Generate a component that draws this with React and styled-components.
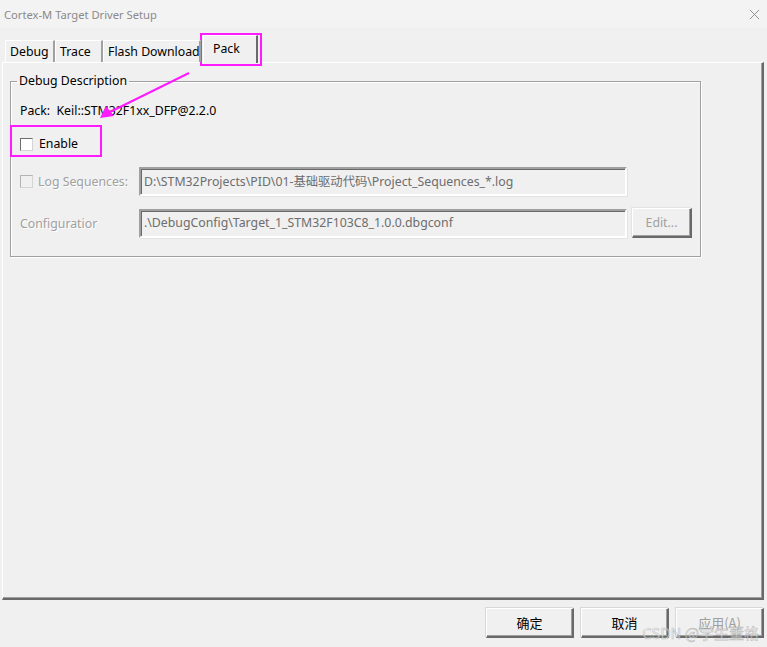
import React from 'react';
import styled, { createGlobalStyle } from 'styled-components';

const GlobalStyle = createGlobalStyle`
    html, body {
        margin: 0;
        padding: 0;
        background: #f0f0f0;
    }
    body {
        font-family: "Noto Sans", "Noto Sans CJK SC", sans-serif;
        font-size: 12.3px;
        color: #000;
    }
`;

const tabs = [
    { label: 'Debug', width: 50 },
    { label: 'Trace', width: 48 },
    { label: 'Flash Download', width: 98 },
    { label: 'Pack', width: 55, active: true },
];

export default () => (
    <Window>
        <GlobalStyle />
        <TitleBar>
            <span>Cortex-M Target Driver Setup</span>
            <CloseIcon viewBox="0 0 12 12">
                <path d="M1 1 L11 11 M11 1 L1 11" />
            </CloseIcon>
        </TitleBar>

        <TabStrip>
            {tabs.map((t) => (
                <Tab key={t.label} $active={t.active} style={{ width: t.width }}>
                    {t.label}
                </Tab>
            ))}
        </TabStrip>

        <Panel>
            <GroupBox>
                <legend>Debug Description</legend>
                <InfoLine>Pack:&nbsp; Keil::STM32F1xx_DFP@2.2.0</InfoLine>
                <CheckRow>
                    <CheckBox />
                    <span>Enable</span>
                </CheckRow>
                <FieldRow $top={14}>
                    <FieldLabel>
                        <CheckBox $disabled />
                        <span>Log Sequences:</span>
                    </FieldLabel>
                    <PathBox>D:\STM32Projects\PID\01-基础驱动代码\Project_Sequences_*.log</PathBox>
                </FieldRow>
                <FieldRow $top={12}>
                    <FieldLabel>Configuratior</FieldLabel>
                    <PathBox>.\DebugConfig\Target_1_STM32F103C8_1.0.0.dbgconf</PathBox>
                    <SmallButton disabled>Edit...</SmallButton>
                </FieldRow>
            </GroupBox>
        </Panel>

        <ButtonBar>
            <DialogButton>确定</DialogButton>
            <DialogButton>取消</DialogButton>
            <DialogButton disabled>应用(A)</DialogButton>
        </ButtonBar>

        <Mark $x={200} $y={33} $w={62} $h={33} />
        <Mark $x={10} $y={125} $w={92} $h={32} />
        <Arrow viewBox="0 0 767 647">
            <line x1="189" y1="73" x2="110" y2="112" />
            <polygon points="100,118 106,106 114,116" />
        </Arrow>
        <Watermark>CSDN @学生董格</Watermark>
    </Window>
);

const Window = styled.div`
    position: relative;
    width: 767px;
    height: 647px;
    display: flex;
    flex-direction: column;
    overflow: hidden;
    background: #f0f0f0;
`;

const TitleBar = styled.div`
    height: 28px;
    flex: none;
    display: flex;
    align-items: center;
    justify-content: space-between;
    padding: 0 7px 0 4px;
    background: #f3f3f3;
    color: #8a8a8a;
    font-size: 11.2px;
`;

const CloseIcon = styled.svg`
    width: 11px;
    height: 11px;
    fill: none;
    stroke: #8a8a8a;
    stroke-width: 1;
`;

const TabStrip = styled.div`
    display: flex;
    align-items: flex-end;
    height: 34px;
    padding-left: 5px;
    flex: none;
`;

const Tab = styled.div`
    position: relative;
    box-sizing: border-box;
    flex: none;
    height: ${(p) => (p.$active ? '28px' : '22px')};
    margin: ${(p) => (p.$active ? '0 0 -1px 2px' : '0')};
    padding: ${(p) => (p.$active ? '4px 0 0 9px' : '2px 0 0 4px')};
    border-top: 1px solid #fff;
    border-left: 1px solid #fff;
    border-right: 2px solid #696969;
    border-right-color: ${(p) => (p.$active ? '#696969' : '#a0a0a0')};
    background: #f0f0f0;
    line-height: 18px;
    white-space: nowrap;
    overflow: hidden;
    z-index: ${(p) => (p.$active ? 2 : 1)};
`;

const Panel = styled.div`
    flex: none;
    height: 538px;
    margin: 0 3px 0 2px;
    box-sizing: border-box;
    border-top: 1px solid #fff;
    border-left: 1px solid #fff;
    border-right: 2px solid #696969;
    border-bottom: 2px solid #696969;
    box-shadow: inset -1px -1px 0 #a0a0a0;
    padding: 11px 0 0 7px;
`;

const GroupBox = styled.fieldset`
    box-sizing: border-box;
    width: 690px;
    height: 183px;
    margin: 0;
    padding: 14px 8px 0 9px;
    border: 1px solid #a0a0a0;
    box-shadow: 1px 1px 0 #fff, inset 1px 1px 0 #fff;

    legend {
        padding: 0 2px;
        margin-left: -3px;
        line-height: 14px;
    }
`;

const InfoLine = styled.div`
    line-height: 18px;
`;

const CheckRow = styled.label`
    display: flex;
    align-items: center;
    gap: 6px;
    margin-top: 15px;
    line-height: 18px;
`;

const CheckBox = styled.span`
    display: inline-block;
    box-sizing: border-box;
    width: 13px;
    height: 13px;
    flex: none;
    border: 1px solid ${(p) => (p.$disabled ? '#b4b4b4' : '#6d6d6d')};
    border-right-color: #d4d4d4;
    border-bottom-color: #d4d4d4;
    background: ${(p) => (p.$disabled ? '#f0f0f0' : '#fff')};
`;

const FieldRow = styled.div`
    display: flex;
    align-items: center;
    margin-top: ${(p) => p.$top}px;
`;

const FieldLabel = styled.div`
    width: 119px;
    flex: none;
    display: flex;
    align-items: center;
    gap: 5px;
    color: #a0a0a0;
    text-shadow: 1px 1px 0 #fff;
`;

const PathBox = styled.div`
    box-sizing: border-box;
    width: 488px;
    height: 29px;
    flex: none;
    padding: 3px 3px 0;
    border: 2px solid #a0a0a0;
    border-right-color: #fff;
    border-bottom-color: #fff;
    box-shadow: inset 1px 1px 0 #696969, 1px 1px 0 #e3e3e3;
    color: #6d6d6d;
    white-space: nowrap;
    overflow: hidden;
`;

const SmallButton = styled.button`
    box-sizing: border-box;
    width: 60px;
    height: 30px;
    margin-left: 5px;
    font: inherit;
    color: #a0a0a0;
    background: #f0f0f0;
    border: 1px solid #fff;
    border-right: 2px solid #696969;
    border-bottom: 2px solid #696969;
    box-shadow: inset -1px -1px 0 #a0a0a0, -1px -1px 0 #e3e3e3;
    padding: 0;
`;

const ButtonBar = styled.div`
    display: flex;
    justify-content: flex-end;
    gap: 7px;
    padding: 8px 3px 0 0;
`;

const DialogButton = styled.button`
    box-sizing: border-box;
    width: 88px;
    height: 30px;
    padding: 0;
    font-family: "Noto Sans CJK SC", sans-serif;
    font-size: 13px;
    color: ${(p) => (p.disabled ? '#a0a0a0' : '#000')};
    background: #f0f0f0;
    border: 1px solid #fff;
    border-right: 2px solid #696969;
    border-bottom: 2px solid #696969;
    box-shadow: inset -1px -1px 0 #a0a0a0, -1px -1px 0 #d8d8d8;
`;

const Mark = styled.div`
    position: absolute;
    left: ${(p) => p.$x}px;
    top: ${(p) => p.$y}px;
    width: ${(p) => p.$w}px;
    height: ${(p) => p.$h}px;
    box-sizing: border-box;
    border: 2px solid #ff1aff;
    pointer-events: none;
`;

const Arrow = styled.svg`
    position: absolute;
    left: 0;
    top: 0;
    width: 767px;
    height: 647px;
    pointer-events: none;

    line {
        stroke: #ff1aff;
        stroke-width: 2;
    }
    polygon {
        fill: #ff1aff;
    }
`;

const Watermark = styled.div`
    position: absolute;
    right: 8px;
    bottom: 4px;
    font-family: "Noto Sans CJK SC", sans-serif;
    font-size: 15px;
    color: rgba(255, 255, 255, 0.55);
    -webkit-text-stroke: 0.6px rgba(150, 150, 150, 0.6);
    pointer-events: none;
`;
